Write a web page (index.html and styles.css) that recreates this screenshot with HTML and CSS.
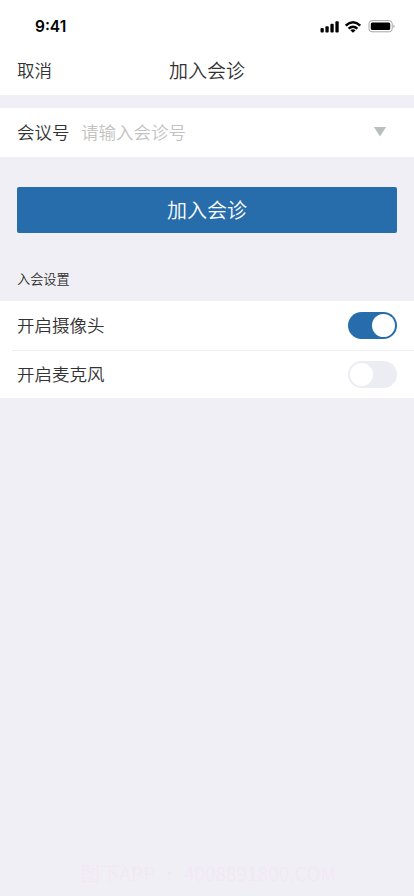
FILE: index.html
```html
<!DOCTYPE html>
<html lang="zh-CN">
<head>
<meta charset="utf-8">
<meta name="viewport" content="width=device-width">
<title>加入会诊</title>
<link rel="stylesheet" href="styles.css">
</head>
<body>
<main class="screen">
  <header class="top">
    <div class="status">
      <span class="time">9:41</span>
      <svg class="status-icons" width="76" height="14" viewBox="0 0 76 14">
        <rect x="0.5" y="9" width="3.3" height="4.6" rx="1"/>
        <rect x="5.4" y="7.2" width="3.3" height="6.4" rx="1"/>
        <rect x="10.4" y="4.8" width="3.3" height="8.8" rx="1"/>
        <rect x="15.4" y="2.2" width="3.3" height="11.4" rx="1"/>
        <g fill="none" stroke="#000" stroke-width="2.4">
          <path d="M25.7 6.6Q33 0 40.3 6.6"/>
          <path d="M28.6 9.6Q33 5.7 37.4 9.6"/>
        </g>
        <path d="M30.3 11.2Q33 9.2 35.7 11.2L33 13.8Z"/>
        <rect x="49" y="1.6" width="23.2" height="11.2" rx="3" fill="none" stroke="#a6a6a6"/>
        <rect x="50.8" y="3.4" width="19.4" height="7.6" rx="1.5"/>
        <path d="M73.4 5.5Q74.6 6 74.6 7.2T73.4 8.9Z" fill="#a6a6a6"/>
      </svg>
    </div>
    <nav class="nav">
      <span class="cancel">取消</span>
      <h1 class="title">加入会诊</h1>
    </nav>
  </header>
  <section class="field">
    <label class="label">会议号</label>
    <span class="placeholder">请输入会诊号</span>
    <svg class="arrow" width="12" height="10" viewBox="0 0 12 10"><path d="M0 0H12L6 9.5Z"/></svg>
  </section>
  <button class="join">加入会诊</button>
  <h2 class="caption">入会设置</h2>
  <section class="settings">
    <div class="row"><span>开启摄像头</span><span class="switch on"></span></div>
    <div class="row second"><span>开启麦克风</span><span class="switch"></span></div>
  </section>
  <footer class="mark">图下APP • 4008891800.COM</footer>
</main>
</body>
</html>
```
FILE: styles.css
```css
* { box-sizing: border-box; }
body {
  margin: 0;
  background: #f0eff5;
  color: #333;
  font-family: "Noto Sans CJK SC", sans-serif;
  font-weight: 350;
}
.screen { height: 896px; display: flex; flex-direction: column; overflow: hidden; }
.top { height: 95px; background: #fff; flex: none; }
.status {
  height: 46px;
  padding: 6px 18px 0 35px;
  display: flex;
  align-items: center;
  justify-content: space-between;
}
.time { padding-top: 2px; font: 600 15.5px/20px Inter, sans-serif; color: #000; }
.nav {
  height: 49px;
  padding: 0 17px 2px;
  display: grid;
  grid-template-columns: 1fr auto 1fr;
  align-items: center;
}
.cancel { padding-top: 1px; font-size: 17.5px; line-height: 26px; }
.title { margin: 0; font-size: 19px; line-height: 28px; font-weight: 350; }
.field {
  height: 49px;
  margin-top: 13px;
  padding: 0 28px 2px 17px;
  background: #fff;
  display: flex;
  align-items: center;
  flex: none;
  font-size: 17.5px;
  line-height: 26px;
}
.placeholder { margin-left: 11.5px; color: #c2c2c2; }
.arrow { margin-left: auto; fill: #b9bebe; }
.join {
  height: 46px;
  margin: 30px 17px 0;
  padding: 0;
  border: 0;
  border-radius: 2px;
  background: #276dab;
  color: #fff;
  font: 350 20px/46px "Noto Sans CJK SC", sans-serif;
  flex: none;
}
.caption { margin: 36px 17px 0; font-size: 13.2px; line-height: 20px; font-weight: 350; flex: none; }
.settings { margin-top: 12px; background: #fff; flex: none; }
.row {
  height: 49px;
  padding: 0 17px;
  display: flex;
  align-items: center;
  justify-content: space-between;
  font-size: 17.5px;
  line-height: 26px;
}
.row > span:first-child { padding-bottom: 2px; }
.second { height: 48px; margin-left: 12px; padding-left: 5px; border-top: 1px solid #eeedf1; }
.switch {
  width: 49px;
  height: 27px;
  padding: 2px;
  border-radius: 14px;
  background: #ecedf2;
  display: flex;
}
.switch::before { content: ""; width: 23px; height: 23px; border-radius: 50%; background: #fff; }
.on { background: #276dab; justify-content: flex-end; }
.mark {
  margin: auto 0 9px;
  padding-left: 81px;
  font: 300 19px/28px "Noto Sans CJK SC", sans-serif;
  letter-spacing: .4px;
  color: #f5e6f5;
  white-space: nowrap;
}
```
